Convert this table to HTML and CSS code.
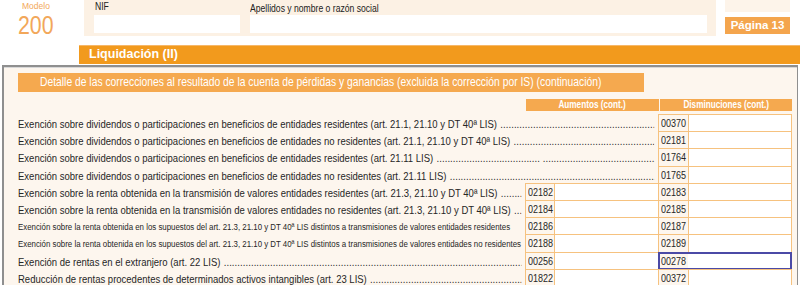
FILE: index.html
```html
<!DOCTYPE html>
<html lang="es">
<head>
<meta charset="utf-8">
<title>Modelo 200 - Página 13</title>
<link rel="stylesheet" href="styles.css">
</head>
<body>
<div class="page">
  <header class="top">
    <div class="modelo">
      <div class="modelo-label">Modelo</div>
      <div class="modelo-num"><span class="nar">200</span></div>
    </div>
    <div class="idpanel">
      <div class="field nif">
        <div class="field-label"><span class="nar">NIF</span></div>
        <div class="field-input"></div>
      </div>
      <div class="field name">
        <div class="field-label"><span class="nar">Apellidos y nombre o razón social</span></div>
        <div class="field-input"></div>
      </div>
    </div>
    <div class="pagebox">
      <div class="pagebox-top"></div>
      <div class="pagebox-num">Página 13</div>
    </div>
  </header>

  <div class="bar">Liquidación (II)</div>

  <section class="main">
    <div class="section-title"><span class="nar">Detalle de las correcciones al resultado de la cuenta de pérdidas y ganancias (excluida la corrección por IS) (continuación)</span></div>

    <div class="grid">
      <div class="colhead aum"><span class="nar-c">Aumentos (cont.)</span></div>
      <div class="colhead dis"><span class="nar-c">Disminuciones (cont.)</span></div>
    </div>

    <div class="grid rows">
      <div class="label wide"><span class="txt">Exención sobre dividendos o participaciones en beneficios de entidades residentes (art. 21.1, 21.10 y DT 40ª LIS)</span><span class="dots"></span></div>
      <div class="code c4"><span class="nar">00370</span></div><div class="input c5"></div>

      <div class="label wide"><span class="txt">Exención sobre dividendos o participaciones en beneficios de entidades no residentes (art. 21.1, 21.10 y DT 40ª LIS)</span><span class="dots"></span></div>
      <div class="code c4"><span class="nar">02181</span></div><div class="input c5"></div>

      <div class="label wide"><span class="txt">Exención sobre dividendos o participaciones en beneficios de entidades residentes (art. 21.11 LIS)</span><span class="dots split"></span></div>
      <div class="code c4"><span class="nar">01764</span></div><div class="input c5"></div>

      <div class="label wide"><span class="txt">Exención sobre dividendos o participaciones en beneficios de entidades no residentes (art. 21.11 LIS)</span><span class="dots"></span></div>
      <div class="code c4"><span class="nar">01765</span></div><div class="input c5"></div>

      <div class="label"><span class="txt">Exención sobre la renta obtenida en la transmisión de valores entidades residentes (art. 21.3, 21.10 y DT 40ª LIS)</span><span class="dots"></span></div>
      <div class="code c2"><span class="nar">02182</span></div><div class="input c3"></div>
      <div class="code c4"><span class="nar">02183</span></div><div class="input c5"></div>

      <div class="label"><span class="txt">Exención sobre la renta obtenida en la transmisión de valores entidades no residentes (art. 21.3, 21.10 y DT 40ª LIS)</span><span class="dots"></span></div>
      <div class="code c2"><span class="nar">02184</span></div><div class="input c3"></div>
      <div class="code c4"><span class="nar">02185</span></div><div class="input c5"></div>

      <div class="label small"><span class="txt">Exención sobre la renta obtenida en los supuestos del art. 21.3, 21.10 y DT 40ª LIS distintos a transmisiones de valores entidades residentes</span></div>
      <div class="code c2"><span class="nar">02186</span></div><div class="input c3"></div>
      <div class="code c4"><span class="nar">02187</span></div><div class="input c5"></div>

      <div class="label small"><span class="txt">Exención sobre la renta obtenida en los supuestos del art. 21.3, 21.10 y DT 40ª LIS distintos a transmisiones de valores entidades no residentes</span></div>
      <div class="code c2"><span class="nar">02188</span></div><div class="input c3"></div>
      <div class="code c4"><span class="nar">02189</span></div><div class="input c5"></div>

      <div class="label"><span class="txt">Exención de rentas en el extranjero (art. 22 LIS)</span><span class="dots"></span></div>
      <div class="code c2"><span class="nar">00256</span></div><div class="input c3"></div>
      <div class="code c4 focus-l"><span class="nar">00278</span></div><div class="input c5 focus-r"></div>

      <div class="label"><span class="txt">Reducción de rentas procedentes de determinados activos intangibles (art. 23 LIS)</span><span class="dots"></span></div>
      <div class="code c2"><span class="nar">01822</span></div><div class="input c3"></div>
      <div class="code c4"><span class="nar">00372</span></div><div class="input c5"></div>
    </div>
  </section>
</div>
</body>
</html>
```

FILE: styles.css
```css
* { box-sizing: border-box; }

html, body {
  margin: 0;
  padding: 0;
  background: #ffffff;
}

body {
  width: 800px;
  height: 285px;
  overflow: hidden;
  font-family: "Liberation Sans", Arial, sans-serif;
  color: #262626;
}

.page {
  width: 800px;
}

/* narrow (Arial Narrow–like) rendering of Liberation Sans */
.nar {
  display: inline-block;
  white-space: nowrap;
  transform: scaleX(0.82);
  transform-origin: left center;
}

.nar-c {
  display: inline-block;
  white-space: nowrap;
  transform: scaleX(0.82);
  transform-origin: center center;
}

/* ---------- top header ---------- */
.top {
  display: flex;
  height: 36px;
}

.modelo {
  width: 84px;
  padding-left: 18px;
  color: #f2a75a;
}

.modelo-label {
  font-size: 8.5px;
  line-height: 9px;
  padding: 2px 0 0 4px;
}

.modelo-num {
  font-size: 26px;
  line-height: 23px;
  margin-top: 3px;
}

.idpanel {
  width: 632px;
  height: 36px;
  background: #fcf1e4;
  display: flex;
  gap: 10px;
  padding: 0 9px 0 10px;
}

.field {
  display: flex;
  flex-direction: column;
  justify-content: flex-end;
  padding-bottom: 3px;
}

.field.nif { width: 146px; }
.field.name { flex: 1; }

.field-label {
  font-size: 10.5px;
  line-height: 12px;
  color: #222;
  padding-bottom: 1px;
}

.nif .field-label { padding-left: 1px; padding-bottom: 3px; }

.field-input {
  height: 18px;
  background: #ffffff;
}

.pagebox {
  width: 65px;
  margin-left: 9px;
  display: flex;
  flex-direction: column;
}

.pagebox-top {
  height: 12px;
  background: #fdf4ea;
}

.pagebox-num {
  margin-top: 5px;
  height: 17px;
  background: #f4a54d;
  color: #fff;
  font-weight: bold;
  font-size: 11.5px;
  line-height: 17px;
  text-align: center;
}

/* ---------- orange bar ---------- */
.bar {
  margin: 9px 0 0 79px;
  height: 19px;
  background: #f29a1d;
  border-top: 1px solid #f6b768;
  color: #fff;
  font-weight: bold;
  font-size: 12.5px;
  line-height: 17px;
  padding-left: 10px;
}

/* ---------- main panel ---------- */
.main {
  margin: 1px 2px 0 2px;
  height: 230px;
  background: #fdf6ee;
  border-top: 2px solid #8f8f8f;
  border-left: 2px solid #8f8f8f;
  border-right: 1px solid #8f8f8f;
  box-shadow: inset 0 1px 0 #d8d8d8;
  padding: 6px 0 0 14px;
}

.section-title {
  width: 626px;
  height: 19px;
  background: #f5a94f;
  color: #fff;
  font-size: 12.6px;
  line-height: 19px;
  padding-left: 22px;
  white-space: nowrap;
}

.grid {
  display: grid;
  grid-template-columns: 508px 29px 104px 30px 103px;
}

.colhead {
  margin-top: 7px;
  height: 12px;
  background: #f5a94f;
  color: #fff;
  font-weight: bold;
  font-size: 10px;
  line-height: 12px;
  text-align: center;
}

.colhead.aum { grid-column: 2 / 4; }
.colhead.dis { grid-column: 4 / 6; margin-left: 1px; }

.rows {
  margin-top: 4px;
  grid-auto-rows: 17.2px;
}

.label {
  grid-column: 1 / 2;
  width: calc(100% / 0.82);
  transform: scaleX(0.82);
  transform-origin: left center;
  display: flex;
  align-items: center;
  font-size: 11.6px;
  white-space: nowrap;
  overflow: hidden;
  padding-right: 6px;
  color: #262626;
}

.label.wide { grid-column: 1 / 4; }

.label.small { font-size: 9.6px; }

.txt { flex: none; }

.dots {
  flex: 1;
  overflow: hidden;
  margin-left: 4px;
  letter-spacing: 0.1px;
}

.dots::after {
  content: "........................................................................................................................................................................................................................................................";
}

.dots.split::after {
  content: "...................................... .....................................................................................................................................................................................";
}

.code, .input {
  border: 1px solid #f6c27f;
  margin: -1px 0 0 -1px;
}

.code {
  font-size: 11px;
  line-height: 16px;
  padding-left: 2px;
  color: #262626;
  overflow: hidden;
}

.input { background: #ffffff; }

.c2 { grid-column: 2; }
.c3 { grid-column: 3; }
.c4 { grid-column: 4; }
.c5 { grid-column: 5; }

.focus-l {
  border: 2px solid #4b4aa6;
  border-right: none;
  padding-left: 1px;
  line-height: 14px;
}

.focus-r {
  border: 2px solid #4b4aa6;
  border-left: none;
}
```
